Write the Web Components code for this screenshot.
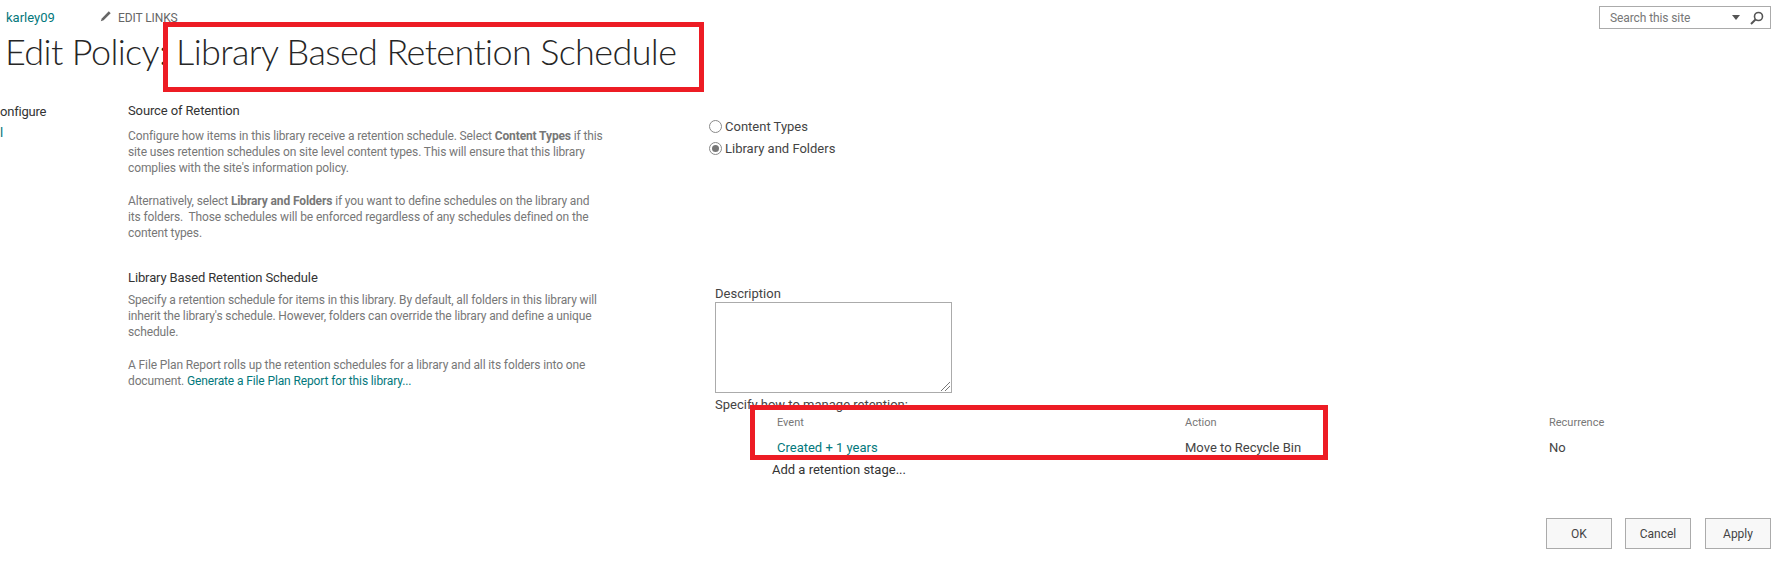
<!DOCTYPE html>
<html lang="en">
<head>
<meta charset="utf-8">
<title>Edit Policy</title>
<style>
  html, body { margin: 0; padding: 0; background: #fff; }
  body { font-family: Roboto, "Open Sans", "Liberation Sans", sans-serif; color: #444; }
</style>
</head>
<body>
<policy-page>
  <site-topbar slot="top" user="karley09"></site-topbar>
  <page-title slot="top">Edit Policy: Library Based Retention Schedule</page-title>

  <form-section heading="Source of Retention">
    <p>Configure how items in this library receive a retention schedule. Select <b>Content Types</b> if this<br>site uses retention schedules on site level content types. This will ensure that this library<br>complies with the site's information policy.</p>
    <p>Alternatively, select <b>Library and Folders</b> if you want to define schedules on the library and<br>its folders.&nbsp; Those schedules will be enforced regardless of any schedules defined on the<br>content types.</p>
    <div slot="control" style="padding-top:15px">
      <radio-option>Content Types</radio-option>
      <radio-option checked>Library and Folders</radio-option>
    </div>
  </form-section>

  <form-section heading="Library Based Retention Schedule" class="second">
    <p>Specify a retention schedule for items in this library. By default, all folders in this library will<br>inherit the library's schedule. However, folders can override the library and define a unique<br>schedule.</p>
    <p>A File Plan Report rolls up the retention schedules for a library and all its folders into one<br>document. <a href="#" style="color:#03787c;text-decoration:none">Generate a File Plan Report for this library...</a></p>
    <retention-editor slot="control"></retention-editor>
  </form-section>

  <button-row slot="bottom"></button-row>
</policy-page>

<script>
class PolicyPage extends HTMLElement {
  connectedCallback() {
    this.attachShadow({ mode: 'open' });
    this.shadowRoot.innerHTML = `
      <style>
        :host { display: block; position: relative; width: 1790px; height: 588px; overflow: hidden; }
        .body { display: grid; grid-template-columns: 128px 1fr; }
        .nav { font-size: 13px; letter-spacing: -0.2px; line-height: 21px; padding-top: 1px; color: #333; white-space: nowrap; }
        .nav span { display: block; color: #03787c; }
        .mark { position: absolute; border: 5px solid #ed1c24; box-sizing: border-box; pointer-events: none; }
        .mark.one { left: 163px; top: 22px; width: 541px; height: 70px; }
        .mark.two { left: 750px; top: 405px; width: 578px; height: 55px; }
      </style>
      <slot name="top"></slot>
      <div class="body">
        <div class="nav">onfigure<span>l</span></div>
        <div><slot></slot></div>
      </div>
      <slot name="bottom"></slot>
      <div class="mark one"></div>
      <div class="mark two"></div>
    `;
  }
}

class SiteTopbar extends HTMLElement {
  connectedCallback() {
    this.attachShadow({ mode: 'open' });
    this.shadowRoot.innerHTML = `
      <style>
        :host { display: flex; align-items: flex-start; height: 32px; padding: 6px 19px 0 6px; box-sizing: border-box; }
        .user { font-size: 13px; line-height: 24px; color: #03787c; width: 92px; }
        .edit { display: flex; align-items: center; gap: 5px; font-size: 12px; letter-spacing: -0.1px; line-height: 24px; color: #666; }
        .edit svg { width: 15px; height: 15px; margin-top: -3px; }
        .search { margin-left: auto; width: 172px; height: 23px; box-sizing: border-box; border: 1px solid #ababab; display: flex; align-items: center; padding: 0 6px 0 10px; font-size: 12px; letter-spacing: -0.1px; color: #777; }
        .search span { flex: 1; }
        .caret { width: 0; height: 0; border: 4px solid transparent; border-top: 5px solid #555; border-bottom: 0; margin-right: 10px; }
        .search svg { width: 14px; height: 14px; }
      </style>
      <div class="user">${this.getAttribute('user')}</div>
      <div class="edit">
        <svg viewBox="0 0 16 16"><path d="M11.5 2.5l2 2L6 12l-3 1 1-3z" fill="#666"/></svg>
        EDIT LINKS
      </div>
      <div class="search">
        <span>Search this site</span>
        <i class="caret"></i>
        <svg viewBox="0 0 14 14" fill="none" stroke="#555"><circle cx="8.5" cy="5.5" r="4" stroke-width="1.6"/><path d="M5.5 8.5L1 13" stroke-width="2"/></svg>
      </div>
    `;
  }
}

class PageTitle extends HTMLElement {
  connectedCallback() {
    this.attachShadow({ mode: 'open' });
    this.shadowRoot.innerHTML = `
      <style>
        :host { display: block; padding-left: 5px; height: 68px; font-family: Lato, "Open Sans", sans-serif; font-size: 36px; font-weight: 300; letter-spacing: -0.62px; line-height: 38px; color: #262626; white-space: nowrap; }
      </style>
      <slot></slot>
    `;
  }
}

class FormSection extends HTMLElement {
  connectedCallback() {
    this.attachShadow({ mode: 'open' });
    this.shadowRoot.innerHTML = `
      <style>
        :host { display: grid; grid-template-columns: 582px 1fr; min-height: 167px; }
        :host(.second) h3 { margin-bottom: 3px; }
        h3 { margin: 0 0 6px; font-size: 13px; font-weight: 400; line-height: 22px; color: #333; }
        .text { font-size: 12px; letter-spacing: -0.12px; line-height: 16.2px; color: #777; }
        ::slotted(p) { margin: 0 0 16px; }
        ::slotted(p) b { color: #666; }
      </style>
      <div class="text">
        <h3>${this.getAttribute('heading')}</h3>
        <slot></slot>
      </div>
      <div><slot name="control"></slot></div>
    `;
  }
}

class RadioOption extends HTMLElement {
  connectedCallback() {
    this.attachShadow({ mode: 'open' });
    const on = this.hasAttribute('checked');
    this.shadowRoot.innerHTML = `
      <style>
        :host { display: flex; align-items: center; gap: 3px; height: 22px; font-size: 13px; color: #444; margin-left: -1px; }
        .dot { width: 13px; height: 13px; box-sizing: border-box; border-radius: 50%; border: 1px solid #8a8a8a; display: flex; align-items: center; justify-content: center; background: #fff; }
        .dot i { width: 7px; height: 7px; border-radius: 50%; background: #777; }
      </style>
      <span class="dot">${on ? '<i></i>' : ''}</span>
      <span><slot></slot></span>
    `;
  }
}

class RetentionEditor extends HTMLElement {
  connectedCallback() {
    this.attachShadow({ mode: 'open' });
    this.shadowRoot.innerHTML = `
      <style>
        :host { display: block; padding: 18px 0 0 5px; font-size: 13px; color: #444; }
        .label { line-height: 17px; }
        .box { width: 237px; height: 91px; box-sizing: border-box; border: 1px solid #ababab; position: relative; }
        .box svg { position: absolute; right: 1px; bottom: 1px; width: 9px; height: 9px; }
        .grid { display: grid; grid-template-columns: 408px 364px 1fr; margin-left: 62px; }
        .head { font-size: 11px; color: #777; line-height: 20px; }
        .cell { line-height: 30px; }
        .link { color: #03787c; }
        .add { margin-left: 57px; line-height: 13px; color: #333; }
      </style>
      <div class="label">Description</div>
      <div class="box"><svg viewBox="0 0 9 9" stroke="#777" fill="none"><path d="M0 9L9 0M4 9L9 4"/></svg></div>
      <div class="label" style="margin-top:3px">Specify how to manage retention:</div>
      <div class="grid">
        <div class="head">Event</div><div class="head">Action</div><div class="head">Recurrence</div>
        <div class="cell link">Created + 1 years</div><div class="cell">Move to Recycle Bin</div><div class="cell">No</div>
      </div>
      <div class="add">Add a retention stage...</div>
    `;
  }
}

class ButtonRow extends HTMLElement {
  connectedCallback() {
    this.attachShadow({ mode: 'open' });
    this.shadowRoot.innerHTML = `
      <style>
        :host { display: flex; justify-content: flex-end; gap: 13px; padding: 0 19px 0 0; margin-top: 42px; }
        button { width: 66px; height: 31px; box-sizing: border-box; border: 1px solid #ababab; background: #f8f8f8; font: 12px Roboto, "Open Sans", sans-serif; color: #444; padding: 0; }
        .mid { margin-right: 1px; }
      </style>
      <button>OK</button><button class="mid">Cancel</button><button>Apply</button>
    `;
  }
}

customElements.define('policy-page', PolicyPage);
customElements.define('site-topbar', SiteTopbar);
customElements.define('page-title', PageTitle);
customElements.define('form-section', FormSection);
customElements.define('radio-option', RadioOption);
customElements.define('retention-editor', RetentionEditor);
customElements.define('button-row', ButtonRow);
</script>
</body>
</html>
